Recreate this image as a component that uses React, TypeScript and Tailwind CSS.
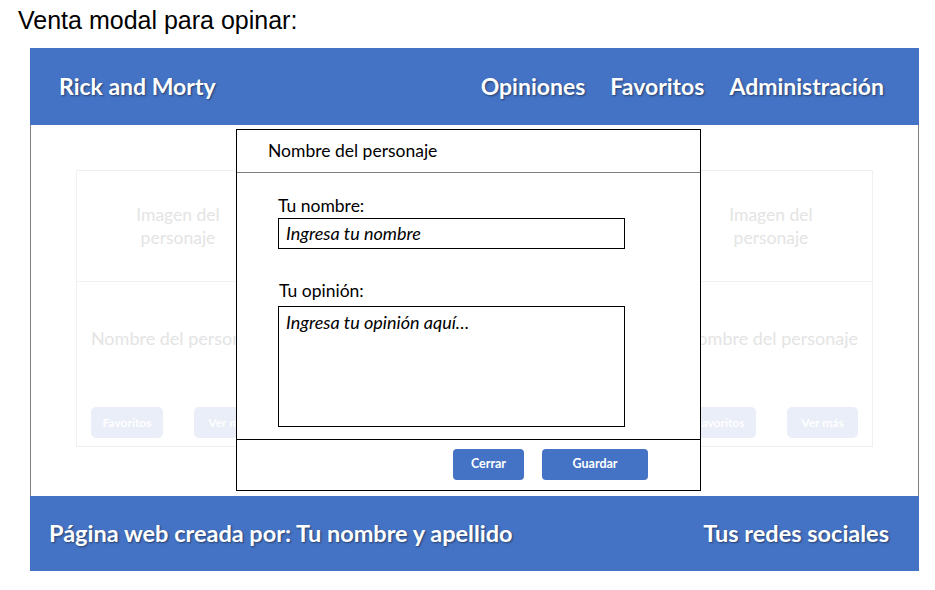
import React from "react";

const calibri = { fontFamily: "Lato, 'Open Sans', 'Noto Sans', sans-serif" };

function GhostCard({ hidden = false }: { hidden?: boolean }) {
  return (
    <div className={`flex h-[277px] w-[204px] flex-col border border-[#f0f0f0] ${hidden ? "invisible" : ""}`}>
      <div className="flex h-[111px] items-center justify-center border-b border-[#f2f2f2] text-center text-[17.5px] leading-[23px] text-[#e4e4e4]">
        Imagen del
        <br />
        personaje
      </div>
      <div className="flex flex-1 flex-col items-center px-[14px]">
        <div className="mt-[45px] whitespace-nowrap text-[18px] leading-[22px] text-[#e4e4e4]">
          Nombre del personaje
        </div>
        <div className="mt-auto mb-[8px] flex w-full justify-between">
          <div className="flex h-[31px] w-[72px] items-center justify-center rounded-[5px] bg-[#e9eef8] text-[12px] font-bold text-white">
            Favoritos
          </div>
          <div className="flex h-[31px] w-[71px] items-center justify-center rounded-[5px] bg-[#e9eef8] text-[12px] font-bold text-white">
            Ver más
          </div>
        </div>
      </div>
    </div>
  );
}

export default function App() {
  return (
    <div className="h-[590px] w-[935px] overflow-hidden bg-white" style={calibri}>
      <div
        className="pl-[18px] pt-[5px] text-[25px] leading-[30px] text-black"
        style={{ fontFamily: "'Liberation Sans', Arial, sans-serif" }}
      >
        Venta modal para opinar:
      </div>
      <div className="ml-[30px] mt-[13px] w-[889px]">
        <header className="flex h-[77px] items-center justify-between bg-[#4472c4] pl-[29px] pr-[35px] text-[23px] font-bold text-white [text-shadow:1px_1px_2px_rgba(0,0,0,0.45)]">
          <span>Rick and Morty</span>
          <nav className="flex gap-[25px]">
            <span>Opiniones</span>
            <span>Favoritos</span>
            <span>Administración</span>
          </nav>
        </header>
        <main className="relative h-[371px] border-x border-[#808080]">
          <div className="ml-[45px] flex w-[797px] justify-between pt-[45px]">
            <GhostCard />
            <GhostCard hidden />
            <GhostCard />
          </div>
          <div className="absolute left-[205px] top-[4px] flex h-[362px] w-[465px] flex-col border border-black bg-white">
            <div className="flex h-[43px] shrink-0 items-center border-b border-[#7f7f7f] pl-[31px] text-[17.5px] text-black">
              Nombre del personaje
            </div>
            <div className="flex flex-1 flex-col pl-[41px] pt-[22px] text-black">
              <label className="text-[17.5px] leading-[21px]">Tu nombre:</label>
              <div className="mt-[2px] flex h-[31px] w-[347px] items-center border border-black px-[7px] text-[18px] italic">
                Ingresa tu nombre
              </div>
              <label className="mt-[31px] pl-[1px] text-[17.5px] leading-[21px]">Tu opinión:</label>
              <div className="mt-[5px] h-[121px] w-[347px] border border-black px-[7px] pt-[4px] text-[18px] leading-[22px] italic">
                Ingresa tu opinión aquí…
              </div>
            </div>
            <div className="flex h-[51px] shrink-0 justify-end gap-[18px] border-t border-black pr-[52px] pt-[9px]">
              <button className="flex h-[31px] w-[71px] items-center justify-center rounded-[4px] bg-[#4472c4] text-[12.5px] font-bold text-white">
                Cerrar
              </button>
              <button className="flex h-[31px] w-[106px] items-center justify-center rounded-[4px] bg-[#4472c4] text-[12.5px] font-bold text-white">
                Guardar
              </button>
            </div>
          </div>
        </main>
        <footer className="flex h-[75px] items-center justify-between bg-[#4472c4] pl-[19px] pr-[30px] text-[23.5px] font-bold text-white [text-shadow:1px_1px_2px_rgba(0,0,0,0.45)]">
          <span>Página web creada por: Tu nombre y apellido</span>
          <span>Tus redes sociales</span>
        </footer>
      </div>
    </div>
  );
}
